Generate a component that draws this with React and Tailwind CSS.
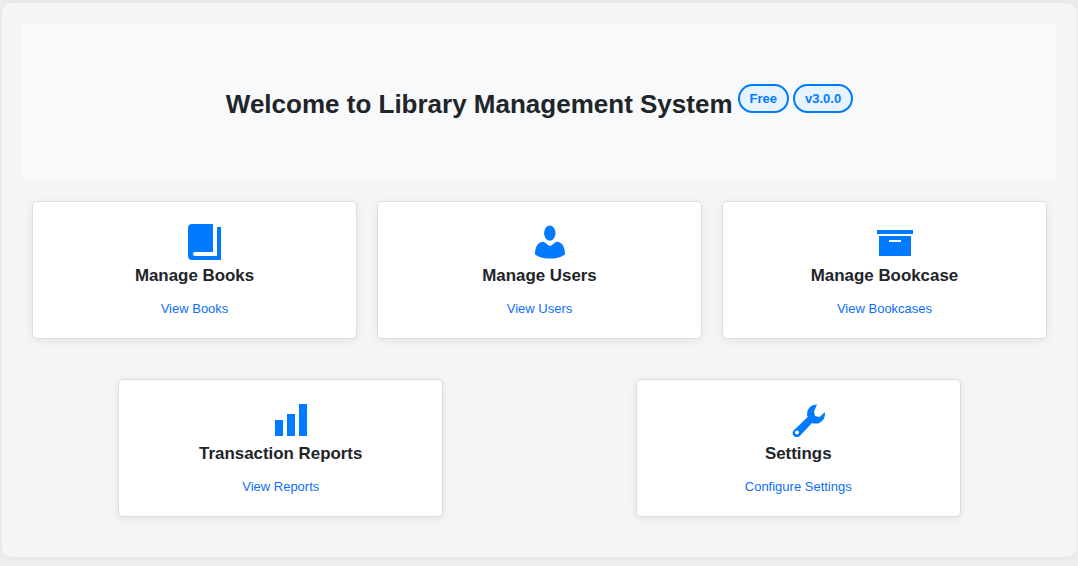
import React from "react";

const BookIcon = () => (
  <svg width="34" height="36" viewBox="0 0 34 36" fill="#007bff">
    <path d="M4 0H25V28H7a2 2 0 0 0 0 4H29V3H33V36H4a4 4 0 0 1-4-4V4a4 4 0 0 1 4-4Z" />
  </svg>
);
const UserIcon = () => (
  <svg width="30" height="34" viewBox="0 0 30 34" fill="#007bff">
    <ellipse cx="14.8" cy="8.2" rx="5.7" ry="7.6" />
    <path d="M0 29.5C0 23 2 18 7.5 16.8C9.5 16.4 11.5 19.5 15 21C18.5 19.5 20.5 16.4 22.5 16.8C28 18 30 23 30 29.5C26 32.5 20 33.6 15 33.6C10 33.6 4 32.5 0 29.5Z" />
  </svg>
);
const ArchiveIcon = () => (
  <svg width="36" height="26" viewBox="0 0 36 26" fill="#007bff" className="mt-[1px]">
    <rect x="0" y="0" width="36" height="4" />
    <path fillRule="evenodd" d="M2 6H34V26H2ZM12 10V12H24V10Z" />
  </svg>
);
const BarsIcon = () => (
  <svg width="32" height="32" viewBox="0 0 32 32" fill="#007bff">
    <rect x="0" y="16" width="8" height="16" />
    <rect x="12" y="10" width="8" height="22" />
    <rect x="24" y="0" width="8" height="32" />
  </svg>
);
const WrenchIcon = () => (
  <svg width="33" height="33" viewBox="0 0 33 33" fill="#007bff">
    <path
      fillRule="evenodd"
      d="M25 .5A9.3 9.3 0 0 0 15 10q0 1.6.6 3L1.6 26.4a4.2 4.2 0 0 0 5.9 5.9L20 19q1.6.6 3 .6A9.3 9.3 0 0 0 32.7 8.2L27.6 13l-4.6-1-1-4.6ZM5 26.5a2 2 0 1 0 0 4a2 2 0 1 0 0-4Z"
    />
  </svg>
);

const Card = ({ icon, title, link, className }) => (
  <div className={`h-[138px] bg-white border border-[#dddddd] rounded-[5px] shadow-[0_2px_8px_rgba(0,0,0,0.08)] flex flex-col items-center ${className}`}>
    <div className="h-[36px] mt-[22px] pl-[20px] flex items-center justify-center">{icon}</div>
    <h3 className="mt-[4px] text-[16.9px] leading-[24px] font-bold text-[#212529]">{title}</h3>
    <a className="mt-[11px] text-[13px] leading-[20px] text-[#0d6efd]">{link}</a>
  </div>
);

const Badge = ({ children }) => (
  <span className="h-[29px] px-[10px] flex items-center rounded-full border-2 border-[#007bff] bg-[#e7f3ff] text-[13px] font-bold text-[#007bff]">
    {children}
  </span>
);

export default function App() {
  return (
    <div className="min-h-[566px] bg-[#eeeeee] pt-[3px] pl-[2px] pr-[1px] font-['Liberation_Sans',Arial,sans-serif]">
      <div className="h-[554px] bg-[#f5f5f5] rounded-[10px] shadow-[0_0_10px_rgba(0,0,0,0.05)] p-[20px]">
        <div className="h-[158px] bg-[#f8f9fa] rounded-[3px] flex items-center justify-center">
          <h1 className="text-[26px] leading-[32px] font-bold text-[#212529] mr-[5px] mt-[4px]">
            Welcome to Library Management System
          </h1>
          <div className="flex gap-[4px] mb-[7px]">
            <Badge>Free</Badge>
            <Badge>v3.0.0</Badge>
          </div>
        </div>
        <div className="flex gap-[20px] mx-[10px] mt-[20px]">
          <Card className="flex-1" icon={<BookIcon />} title="Manage Books" link="View Books" />
          <Card className="flex-1" icon={<UserIcon />} title="Manage Users" link="View Users" />
          <Card className="flex-1" icon={<ArchiveIcon />} title="Manage Bookcase" link="View Bookcases" />
        </div>
        <div className="flex justify-around mt-[40px]">
          <Card className="w-[325px]" icon={<BarsIcon />} title="Transaction Reports" link="View Reports" />
          <Card className="w-[325px]" icon={<WrenchIcon />} title="Settings" link="Configure Settings" />
        </div>
      </div>
    </div>
  );
}
